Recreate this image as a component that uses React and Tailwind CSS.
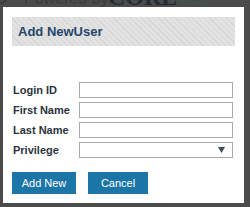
export default function App() {
  const rows = ['Login ID', 'First Name', 'Last Name'];

  return (
    <div className="w-[250px] h-[207px] bg-[#4b4b4b] relative overflow-hidden" style={{ fontFamily: '"Liberation Sans", Arial, sans-serif' }}>
      {/* faded page behind the overlay */}
      <div className="absolute top-[-10px] left-[-6px] w-[14px] h-[14px] rounded-full border-2 border-[#3c3c3c]" />
      <div className="absolute top-[-10px] left-[24px] text-[16px] leading-[18px] text-[#3b3b3b] whitespace-nowrap">Powered by</div>
      <div className="absolute top-[-16px] left-[108px] text-[24px] leading-[26px] font-bold text-[#222b36] whitespace-nowrap" style={{ fontFamily: '"Liberation Serif", serif' }}>
        CORE
      </div>
      <svg className="absolute top-0 left-[180px]" width="40" height="7" viewBox="0 0 40 7">
        <path d="M0 0 Q15 3 30 6" stroke="#3a5a4a" strokeWidth="1.5" fill="none" />
      </svg>

      <div className="absolute left-[3px] top-[7px] w-[241px] h-[196px] bg-white px-[9px] pt-[10px]">
        {/* Header */}
        <div
          className="h-[29px] w-[223px] flex items-center pl-[6px]"
          style={{
            backgroundColor: '#e2e2e2',
            backgroundImage:
              'repeating-linear-gradient(45deg, #e2e2e2 0px, #e2e2e2 3px, #d6d6d6 3px, #d6d6d6 4px)',
          }}
        >
          <span className="text-[13px] font-bold text-[#25466b]">Add NewUser</span>
        </div>

        {/* Form */}
        <div className="mt-[36px] flex flex-col gap-[4px]">
          {rows.map((label) => (
            <div key={label} className="flex items-center h-[16px]">
              <span className="w-[67px] pl-[1px] text-[11px] font-bold text-[#2b3440]">{label}</span>
              <input className="w-[154px] h-[16px] border border-[#a9a9a9] bg-white outline-none" />
            </div>
          ))}
          <div className="flex items-center h-[16px]">
            <span className="w-[67px] pl-[1px] text-[11px] font-bold text-[#2b3440]">Privilege</span>
            <div className="w-[154px] h-[16px] border border-[#a9a9a9] bg-white flex items-center justify-end pr-[7px]">
              <svg width="7" height="6" viewBox="0 0 7 6">
                <path d="M0 0 H7 L3.5 6 Z" fill="#3f4e5a" />
              </svg>
            </div>
          </div>
        </div>

        {/* Buttons */}
        <div className="mt-[14px] flex gap-[12px]">
          <button className="w-[64px] h-[22px] bg-[#1b75a7] text-white text-[11px]">Add New</button>
          <button className="w-[60px] h-[22px] bg-[#1b75a7] text-white text-[11px]">Cancel</button>
        </div>
      </div>
    </div>
  );
}
